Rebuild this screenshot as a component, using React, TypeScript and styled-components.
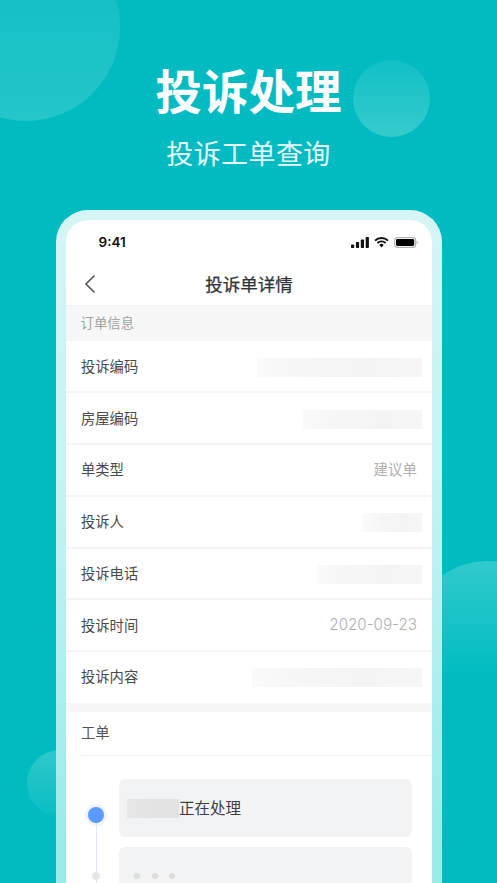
import React from 'react';
import styled, { createGlobalStyle } from 'styled-components';

const GlobalStyle = createGlobalStyle`
  html, body {
    margin: 0;
    padding: 0;
    background: #00bcc2;
  }
  * {
    box-sizing: border-box;
  }
`;

const Page = styled.div`
  position: relative;
  width: 497px;
  height: 883px;
  overflow: hidden;
  background: #00bcc2;
  font-family: 'Noto Sans CJK SC', 'Liberation Sans', sans-serif;
`;

const Circle = styled.div<{ $left: number; $top: number; $size: number; $from: string; $to: string }>`
  position: absolute;
  left: ${p => p.$left}px;
  top: ${p => p.$top}px;
  width: ${p => p.$size}px;
  height: ${p => p.$size}px;
  border-radius: 50%;
  background: linear-gradient(180deg, ${p => p.$from}, ${p => p.$to});
`;

const Header = styled.header`
  position: relative;
  display: flex;
  flex-direction: column;
  align-items: center;
  padding-top: 55px;
  color: #fff;
`;

const Title = styled.h1`
  margin: 0;
  font-size: 46.5px;
  line-height: 68px;
  font-weight: 700;
`;

const Subtitle = styled.h2`
  margin: 0;
  padding-top: 10px;
  font-size: 27px;
  line-height: 40px;
  font-weight: 400;
  letter-spacing: 0.4px;
  color: #e6f9f9;
`;

const PhoneFrame = styled.div`
  position: relative;
  margin: 37px 0 0 56px;
  width: 386px;
  height: 720px;
  padding: 10px 10px 0;
  border-radius: 32px 32px 0 0;
  background: linear-gradient(180deg, #d6f5f5 0%, #c4f2f3 40%, #9aeaea 90%);
`;

const Screen = styled.div`
  height: 100%;
  border-radius: 22px 22px 0 0;
  background: #fff;
  overflow: hidden;
`;

const StatusBar = styled.div`
  height: 42px;
  padding: 12px 14px 0 32.5px;
  display: flex;
  justify-content: space-between;
  align-items: flex-start;
`;

const Time = styled.span`
  font-family: 'Inter', 'Liberation Sans', sans-serif;
  font-size: 13.5px;
  line-height: 20px;
  font-weight: 600;
  color: #111;
`;

const StatusIcons = styled.div`
  display: flex;
  align-items: center;
  gap: 5px;
  height: 20px;
`;

const NavBar = styled.div`
  position: relative;
  height: 44px;
  display: flex;
  align-items: center;
  justify-content: center;
  border-bottom: 1px solid #f1f1f3;
`;

const BackIcon = styled.svg`
  position: absolute;
  left: 18px;
  top: 12px;
`;

const NavTitle = styled.div`
  font-size: 17.5px;
  line-height: 26px;
  font-weight: 400;
  color: #2e3338;
  -webkit-text-stroke: 0.25px #2e3338;
`;

const SectionHead = styled.div`
  height: 34.6px;
  padding: 0 0 3px 14.5px;
  display: flex;
  align-items: center;
  font-size: 13.4px;
  color: #a0a0a0;
  background: #f7f7f8;
`;

const Rows = styled.div`
  padding-top: 1px;
`;

const Row = styled.div<{ $last?: boolean }>`
  height: ${p => (p.$last ? '50.75px' : '51.75px')};
  padding: 0 15px ${p => (p.$last ? '1px' : '2px')};
  display: flex;
  align-items: center;
  justify-content: space-between;
  border-bottom: 2px solid ${p => (p.$last ? 'transparent' : '#f5f5f5')};
`;

const RowLabel = styled.span`
  font-size: 14.3px;
  color: #4a4a4a;
`;

const RowValue = styled.span<{ $latin?: boolean }>`
  font-size: ${p => (p.$latin ? '15.2px' : '14.5px')};
  color: #b0b0b0;
  font-family: ${p => (p.$latin ? "'Inter', 'Noto Sans CJK SC', sans-serif" : 'inherit')};
  font-weight: ${p => (p.$latin ? 300 : 400)};
`;

const Blurred = styled.div<{ $width: number }>`
  width: ${p => p.$width}px;
  height: 19px;
  margin: 4px -5px 0 0;
  background: linear-gradient(90deg, #fafafa 0%, #f5f5f5 35%, #f4f4f4 70%, #f6f6f6 100%);
`;

const Gap = styled.div`
  height: 9.4px;
  background: #f7f7f8;
`;

const TicketHead = styled.div`
  height: 44px;
  margin-left: 14px;
  padding: 0 0 4px 1px;
  display: flex;
  align-items: center;
  font-size: 14.3px;
  color: #555;
  border-bottom: 1px solid #f1f1f3;
`;

const Timeline = styled.div`
  display: grid;
  grid-template-columns: 53px 293px;
  padding-top: 23px;
`;

const Rail = styled.div`
  display: flex;
  flex-direction: column;
  align-items: center;
  padding-top: 28px;
  margin-left: 14px;
  width: 32px;
`;

const ActiveDot = styled.div`
  flex: none;
  width: 16px;
  height: 16px;
  border-radius: 50%;
  background: #5b9aff;
  box-shadow: 0 0 0 3px #eff4ff;
`;

const RailLine = styled.div`
  flex: none;
  width: 1px;
  height: 49px;
  background: #dfe5f1;
`;

const SmallDot = styled.div`
  flex: none;
  width: 8px;
  height: 8px;
  border-radius: 50%;
  background: #e6e6e6;
`;

const RailTail = styled.div`
  flex: none;
  width: 1px;
  height: 10px;
  background: #dfe5f1;
`;

const Cards = styled.div`
  display: flex;
  flex-direction: column;
  gap: 10px;
`;

const Card = styled.div<{ $height: number }>`
  height: ${p => p.$height}px;
  border-radius: 6px;
  background: #f2f3f5;
  display: flex;
  align-items: center;
  padding-left: 8px;
  flex: none;
`;

const NameBlur = styled.div`
  width: 52px;
  height: 19px;
  background: linear-gradient(90deg, #e6e6e6, #e2e2e2);
`;

const CardText = styled.span`
  padding-bottom: 2px;
  font-size: 15.5px;
  color: #3c3f43;
`;

const Dots = styled.div`
  display: flex;
  gap: 11.5px;
  padding: 26px 0 0 7px;
  align-self: flex-start;
`;

const Dot = styled.div`
  width: 6px;
  height: 6px;
  border-radius: 50%;
  background: #dcdcdc;
`;

const SignalIcon = () => (
  <svg width="18" height="11" viewBox="0 0 18 11">
    <rect x="0" y="7.5" width="3.2" height="3.5" rx="0.7" fill="#111" />
    <rect x="4.9" y="5" width="3.2" height="6" rx="0.7" fill="#111" />
    <rect x="9.8" y="2.5" width="3.2" height="8.5" rx="0.7" fill="#111" />
    <rect x="14.7" y="0" width="3.2" height="11" rx="0.7" fill="#111" />
  </svg>
);

const WifiIcon = () => (
  <svg width="15" height="11" viewBox="0 0 15 11">
    <path d="M1 3.6a9.3 9.3 0 0 1 13 0" fill="none" stroke="#111" strokeWidth="1.9" />
    <path d="M3.4 6a5.9 5.9 0 0 1 8.2 0" fill="none" stroke="#111" strokeWidth="1.9" />
    <path d="M5.3 7.9a3 3 0 0 1 4.4 0L7.5 10.6z" fill="#111" />
  </svg>
);

const BatteryIcon = () => (
  <svg width="24" height="11" viewBox="0 0 24 11">
    <rect x="0.6" y="0.6" width="21" height="9.8" rx="2.6" fill="none" stroke="#b4b4b4" strokeWidth="1.2" />
    <rect x="2" y="2" width="18.2" height="7" rx="1.4" fill="#000" />
    <path d="M22.6 3.8c.8.3 1.2.9 1.2 1.7s-.4 1.4-1.2 1.7z" fill="#b0b0b0" />
  </svg>
);

export default function App() {
  return (
    <Page>
      <GlobalStyle />
      <Circle $left={-68} $top={-67} $size={188} $from="#0cbdc3" $to="#24c6ca" />
      <Circle $left={353} $top={60} $size={77} $from="#10c0c5" $to="#36cbcd" />
      <Circle $left={27} $top={750} $size={66} $from="#2ec9ca" $to="#0abdc3" />
      <Circle $left={408} $top={561} $size={160} $from="#30cacc" $to="#00bcc2 72%" />
      <Header>
        <Title>投诉处理</Title>
        <Subtitle>投诉工单查询</Subtitle>
      </Header>
      <PhoneFrame>
        <Screen>
          <StatusBar>
            <Time>9:41</Time>
            <StatusIcons>
              <SignalIcon />
              <WifiIcon />
              <BatteryIcon />
            </StatusIcons>
          </StatusBar>
          <NavBar>
            <BackIcon width="12" height="20" viewBox="0 0 12 20">
              <path d="M10.5 1.5 2 10l8.5 8.5" fill="none" stroke="#555" strokeWidth="1.6" />
            </BackIcon>
            <NavTitle>投诉单详情</NavTitle>
          </NavBar>
          <SectionHead>订单信息</SectionHead>
          <Rows>
            <Row>
              <RowLabel>投诉编码</RowLabel>
              <Blurred $width={165} />
            </Row>
            <Row>
              <RowLabel>房屋编码</RowLabel>
              <Blurred $width={119} />
            </Row>
            <Row>
              <RowLabel>单类型</RowLabel>
              <RowValue>建议单</RowValue>
            </Row>
            <Row>
              <RowLabel>投诉人</RowLabel>
              <Blurred $width={59} />
            </Row>
            <Row>
              <RowLabel>投诉电话</RowLabel>
              <Blurred $width={104} />
            </Row>
            <Row>
              <RowLabel>投诉时间</RowLabel>
              <RowValue $latin>2020-09-23</RowValue>
            </Row>
            <Row $last>
              <RowLabel>投诉内容</RowLabel>
              <Blurred $width={170} />
            </Row>
          </Rows>
          <Gap />
          <TicketHead>工单</TicketHead>
          <Timeline>
            <Rail>
              <ActiveDot />
              <RailLine />
              <SmallDot />
              <RailTail />
            </Rail>
            <Cards>
              <Card $height={58}>
                <NameBlur />
                <CardText>正在处理</CardText>
              </Card>
              <Card $height={60}>
                <Dots>
                  <Dot />
                  <Dot />
                  <Dot />
                </Dots>
              </Card>
            </Cards>
          </Timeline>
        </Screen>
      </PhoneFrame>
    </Page>
  );
}
